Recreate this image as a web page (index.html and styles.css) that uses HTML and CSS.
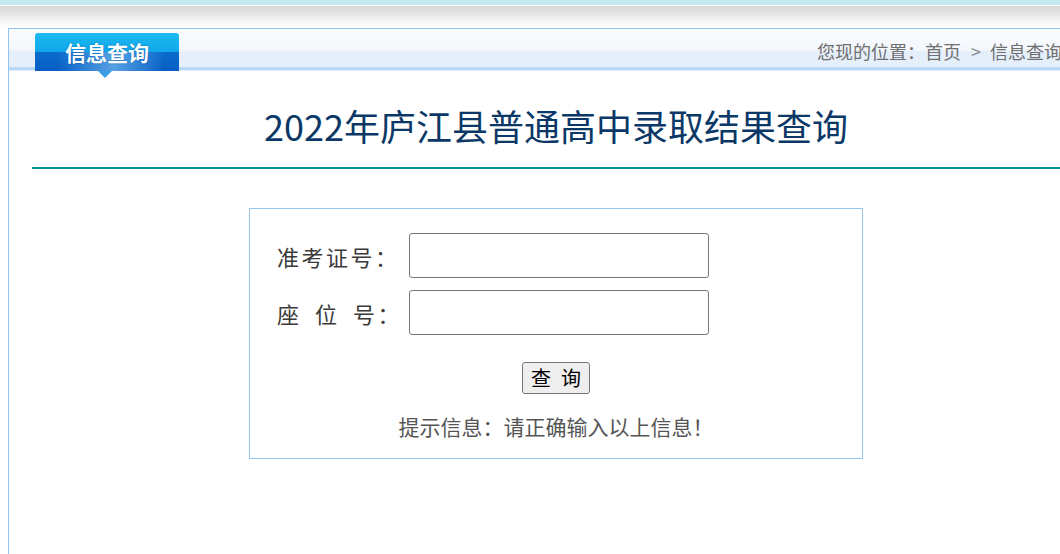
FILE: index.html
```html
<!DOCTYPE html>
<html lang="zh-CN">
<head>
<meta charset="utf-8">
<title>信息查询</title>
<link rel="stylesheet" href="styles.css">
</head>
<body>
<div class="topbar"></div>
<div class="page">
  <div class="header">
    <div class="tab">信息查询</div>
    <div class="crumb">您现的位置：首页<span class="sep">&gt;</span>信息查询</div>
  </div>
  <div class="content">
    <h1 class="title">2022年庐江县普通高中录取结果查询</h1>
    <form class="box" onsubmit="return false;">
      <div class="row">
        <label class="label" for="zkz">准考证号：</label>
        <input class="field" id="zkz" type="text">
      </div>
      <div class="row">
        <label class="label" for="zwh">座&ensp;位&ensp;号：</label>
        <input class="field" id="zwh" type="text">
      </div>
      <div class="actions">
        <button class="btn" type="submit">查&ensp;询</button>
      </div>
      <p class="hint">提示信息：请正确输入以上信息！</p>
    </form>
  </div>
</div>
</body>
</html>
```

FILE: styles.css
```css
html, body {
  margin: 0;
  padding: 0;
  overflow: hidden;
  background: #fff;
  font-family: "Noto Sans CJK SC", "Noto Sans", sans-serif;
}

.topbar {
  height: 28px;
  background: linear-gradient(to bottom,
    #c4e9f1 0, #c4e9f1 5px,
    #ffffff 5px, #ffffff 6px,
    #d6d6d6 6px, #f6f6f6 22px, #ffffff 26px, #ffffff 28px);
}

.page {
  margin-left: 8px;
  width: 1096px;
  min-height: 560px;
  border: 1px solid #92c2f2;
  border-bottom: none;
}

.header {
  display: flex;
  align-items: flex-end;
  height: 42px;
  background: linear-gradient(to bottom,
    #fafcfe 0%, #f3f7fc 50%, #e3eefa 54%, #e6f0fb 90%,
    #b7d5f5 92%, #b7d5f5 97%, #ffffff 100%);
}

.tab {
  position: relative;
  margin-left: 26px;
  width: 144px;
  height: 38px;
  border-radius: 3px 3px 0 0;
  color: #fff;
  font-size: 21px;
  font-weight: bold;
  line-height: 38px;
  text-align: center;
  text-shadow: 0 0 2px rgba(0, 60, 140, .5);
  background:
    linear-gradient(to right, rgba(140, 205, 248, 0) 15%, rgba(140, 205, 248, .6) 55%, rgba(140, 205, 248, 0) 90%) bottom / 100% 50% no-repeat,
    linear-gradient(to bottom, #1dbbf3 0%, #10a7e9 50%, #0a6ccd 50%, #085dc3 100%);
}

.tab::after {
  content: "";
  position: absolute;
  left: 63px;
  top: 38px;
  border-left: 7px solid transparent;
  border-right: 7px solid transparent;
  border-top: 7px solid #3a9ee8;
}

.crumb {
  margin-left: 638px;
  align-self: center;
  font-size: 18px;
  color: #6f6f6f;
  white-space: nowrap;
  padding-top: 2px;
}

.sep {
  display: inline-block;
  margin: 0 9px 0 10px;
  color: #8a8a8a;
}

.content {
  margin-left: 23px;
  margin-right: 25px;
}

.title {
  margin: 0;
  padding: 33px 0 21px;
  line-height: 42px;
  font-size: 36px;
  font-weight: normal;
  color: #0b3866;
  text-align: center;
  border-bottom: 2px solid #009595;
}

.box {
  width: 612px;
  margin: 39px auto 0;
  border: 1px solid #99c8ee;
  padding: 24px 0 18px;
  box-sizing: content-box;
}

.row {
  display: flex;
  align-items: center;
  padding-left: 27px;
  margin-bottom: 12px;
}

.label {
  width: 132px;
  font-size: 22px;
  letter-spacing: 2.5px;
  color: #3a3a3a;
  white-space: nowrap;
}

.field {
  box-sizing: border-box;
  width: 300px;
  height: 45px;
  margin: 0;
  border: 1px solid #767676;
  border-radius: 3px;
  background: #fff;
  font-size: 18px;
}

.actions {
  display: flex;
  justify-content: center;
  margin-top: 27px;
}

.btn {
  box-sizing: border-box;
  height: 32px;
  padding: 0 8px;
  margin: 0;
  font-family: "Noto Sans CJK SC", sans-serif;
  font-size: 20px;
  line-height: 28px;
  color: #000;
  background: #efefef;
  border: 1px solid #767676;
  border-radius: 3px;
}

.hint {
  margin: 18px 0 0;
  text-align: center;
  font-size: 21px;
  line-height: 28px;
  color: #555;
}
```
